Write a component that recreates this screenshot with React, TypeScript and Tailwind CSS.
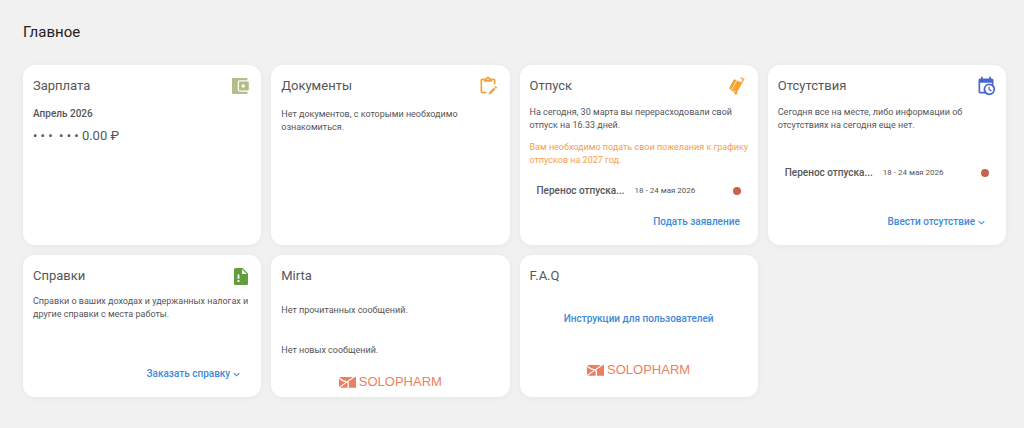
import type { ReactNode } from "react";

type IconProps = { className?: string };

function WalletIcon({ className = "" }: IconProps) {
  return (
    <svg viewBox="0 0 17 16" className={className} fill="currentColor" aria-hidden="true">
      <path
        fillRule="evenodd"
        d="M1 0h13.500a1 1 0 0 1 1 1v1.300H8A2.300 2.300 0 0 0 5.700 4.600v6.800A2.300 2.300 0 0 0 8 13.700h7.500V15a1 1 0 0 1-1 1H1a1 1 0 0 1-1-1V1a1 1 0 0 1 1-1z"
      />
      <path fillRule="evenodd" d="M7.900 3.500h7.900a1 1 0 0 1 1 1v7a1 1 0 0 1-1 1H7.900a1 1 0 0 1-1-1v-7a1 1 0 0 1 1-1zM9.800 6.600v2.800h2.800V6.600z" />
    </svg>
  );
}

function ClipboardEditIcon({ className = "" }: IconProps) {
  return (
    <svg viewBox="0 0 24 24" className={className} fill="currentColor" aria-hidden="true">
      <path d="M21.040 12.130c.14 0 .27.060.38.170l1.280 1.280c.22.210.22.560 0 .770l-1 1-2.050-2.050 1-1c.11-.11.25-.17.390-.17m-1.970 1.750 2.050 2.050L15.060 22H13v-2.060l6.070-6.060M11 19l-2 2H5c-1.100 0-2-.9-2-2V5c0-1.100.9-2 2-2h4.180C9.600 1.840 10.700 1 12 1s2.400.84 2.820 2H19c1.100 0 2 .9 2 2v4l-2 2V5h-2v2H7V5H5v14h6M12 3c-.55 0-1 .45-1 1s.45 1 1 1 1-.45 1-1-.45-1-1-1z" />
    </svg>
  );
}

function LuggageIcon({ className = "" }: IconProps) {
  return (
    <svg viewBox="0 0 16 18" className={className} fill="currentColor" aria-hidden="true">
      <path d="M5.600 2.400 7.600 3.200 2.300 12.800.9 12c-.5-.3-.7-.9-.4-1.400L4.500 2.900c.2-.5.600-.7 1.100-.5z" />
      <path d="M8.200 3.400 12.700 5.400 7.600 14.500 2.900 13z" />
      <path
        d="M7.300 15.300 13.700 4 14.800 2M12.100 1l1.400.9"
        fill="none"
        stroke="currentColor"
        strokeWidth="1.300"
        strokeLinecap="round"
      />
      <path d="m1.600 13 5.300 2.400" stroke="currentColor" strokeWidth="1" />
      <circle cx="6.800" cy="16" r="1.600" />
    </svg>
  );
}

function CalendarClockIcon({ className = "" }: IconProps) {
  return (
    <svg viewBox="0 0 24 24" className={className} fill="currentColor" aria-hidden="true">
      <path d="M15 13h1.500v2.820l2.440 1.410-.75 1.300L15 16.690V13m4-5H5v11h4.670c-.43-.91-.67-1.930-.67-3a7 7 0 0 1 7-7c1.070 0 2.090.24 3 .67V8M5 21a2 2 0 0 1-2-2V5c0-1.110.89-2 2-2h1V1h2v2h8V1h2v2h1a2 2 0 0 1 2 2v6.100c1.240 1.260 2 2.990 2 4.900a7 7 0 0 1-7 7c-1.910 0-3.640-.76-4.900-2H5m11-9.850A4.850 4.850 0 0 0 11.150 16c0 2.680 2.170 4.850 4.850 4.850A4.850 4.850 0 0 0 20.850 16c0-2.680-2.170-4.850-4.850-4.850z" />
    </svg>
  );
}

function FileAlertIcon({ className = "" }: IconProps) {
  return (
    <svg viewBox="0 0 14 17" className={className} fill="currentColor" aria-hidden="true">
      <path
        fillRule="evenodd"
        d="M1.500 0H8.500L14 5.500v10a1.500 1.500 0 0 1-1.500 1.500h-11A1.500 1.500 0 0 1 0 15.500v-14A1.500 1.500 0 0 1 1.500 0zM8 1.200v4.800h4.800zM3.600 6.500v4.300h1.800V6.500zM3.600 12.100v1.800h1.800v-1.800z"
      />
    </svg>
  );
}

function ChevronIcon() {
  return (
    <svg viewBox="0 0 8 5" className="w-[7px] h-[5px] mt-px" fill="none" stroke="currentColor" strokeWidth="1.200" aria-hidden="true">
      <path d="M.8 1 4 4l3.200-3" />
    </svg>
  );
}

function Logo() {
  return (
    <div className="flex items-center justify-center gap-[3px] text-[#ec7f62]">
      <svg viewBox="0 0 17 11" className="w-[17px] h-[11px]" fill="currentColor" aria-hidden="true">
        <path d="M.2 0h13.800L8.200 4.200C5.800 3.900 2.300 2.700.2 0z" />
        <path d="M0 1.500C1.800 3.500 4.300 4.700 6.700 5.200L0 10z" />
        <path d="M.8 10.700 8 5.500c.8 1.300.9 3.200.4 5.200z" />
        <path d="M9.300 4.800 16 0h1v10.700H9.700C10.300 8.600 10.200 6.500 9.300 4.800z" />
      </svg>
      <span className="font-['Liberation_Sans',sans-serif] text-[13px] leading-4">SOLOPHARM</span>
    </div>
  );
}

function Card({ title, icon, children }: { title: string; icon?: ReactNode; children: ReactNode }) {
  return (
    <section className="flex flex-col rounded-xl bg-white px-[10px] pt-[11px] pb-[15px] shadow-[0_1px_6px_rgba(0,0,0,0.05)]">
      <header className="flex h-5 items-center justify-between">
        <h2 className="text-[13px] leading-5">{title}</h2>
        {icon}
      </header>
      {children}
    </section>
  );
}

function LeaveRow() {
  return (
    <div className="flex items-center px-[7px]">
      <span className="text-[10px] leading-4 font-medium">Перенос отпуска...</span>
      <span className="ml-[10px] text-[8px] leading-4">18 - 24 мая 2026</span>
      <span className="ml-auto size-2 rounded-full bg-[#c9604f]" />
    </div>
  );
}

function Action({ children, menu = false }: { children: string; menu?: boolean }) {
  return (
    <button
      type="button"
      className={`mt-auto flex items-center gap-[3px] self-end text-[10px] leading-4 font-medium text-[#3d8bd9] ${
        menu ? "mr-[11px]" : "mr-2"
      }`}
    >
      {children}
      {menu && <ChevronIcon />}
    </button>
  );
}

export default function App() {
  return (
    <main className="min-h-screen bg-[#f1f1f1] pt-[22px] pr-[18px] pb-[30px] pl-[23px] font-[Roboto,sans-serif] text-[#55565a]">
      <h1 className="text-[15px] leading-5 text-[#222]">Главное</h1>
      <div className="mt-[23px] grid grid-cols-4 gap-[10px] text-[9px] leading-[13px]">
        <Card title="Зарплата" icon={<WalletIcon className="mr-0.5 h-4 w-[17px] text-[#b4bd86]" />}>
          <p className="mt-[10px] text-[10px] leading-4 font-medium">Апрель 2026</p>
          <p className="mt-1 text-[13px] leading-5">•&nbsp;•&nbsp;•&nbsp; •&nbsp;•&nbsp;• 0.00 ₽</p>
        </Card>
        <Card title="Документы" icon={<ClipboardEditIcon className="mr-0.5 size-5 text-[#f3a33c]" />}>
          <p className="mt-3">
            Нет документов, с которыми необходимо
            <br />
            ознакомиться.
          </p>
        </Card>
        <Card title="Отпуск" icon={<LuggageIcon className="mr-[3px] h-[18px] w-4 text-[#f6a22b]" />}>
          <p className="mt-[10px]">
            На сегодня, 30 марта вы перерасходовали свой
            <br />
            отпуск на 16.33 дней.
          </p>
          <p className="-mr-2 mt-[9px] mb-4 text-[#f2a150]">
            Вам необходимо подать свои пожелания к графику
            <br />
            отпусков на 2027 год.
          </p>
          <LeaveRow />
          <div className="flex grow flex-col pt-[15px]">
            <Action>Подать заявление</Action>
          </div>
        </Card>
        <Card title="Отсутствия" icon={<CalendarClockIcon className="size-5 text-[#4668ce]" />}>
          <p className="mt-[10px] mb-[33px]">
            Сегодня все на месте, либо информации об
            <br />
            отсутствиях на сегодня еще нет.
          </p>
          <LeaveRow />
          <Action menu>Ввести отсутствие</Action>
        </Card>
        <Card title="Справки" icon={<FileAlertIcon className="mr-[3px] h-[17px] w-[14px] text-[#649d3e]" />}>
          <p className="mt-[9px]">
            Справки о ваших доходах и удержанных налогах и
            <br />
            другие справки с места работы.
          </p>
          <Action menu>Заказать справку</Action>
        </Card>
        <Card title="Mirta">
          <p className="mt-[18px]">Нет прочитанных сообщений.</p>
          <p className="mt-[27px] mb-[17px]">Нет новых сообщений.</p>
          <div className="-mb-2">
            <Logo />
          </div>
        </Card>
        <Card title="F.A.Q">
          <a href="#instructions" className="mt-[25px] self-center text-[10px] leading-4 font-medium text-[#3d8bd9]">
            Инструкции для пользователей
          </a>
          <div className="mt-[35px]">
            <Logo />
          </div>
        </Card>
      </div>
    </main>
  );
}
